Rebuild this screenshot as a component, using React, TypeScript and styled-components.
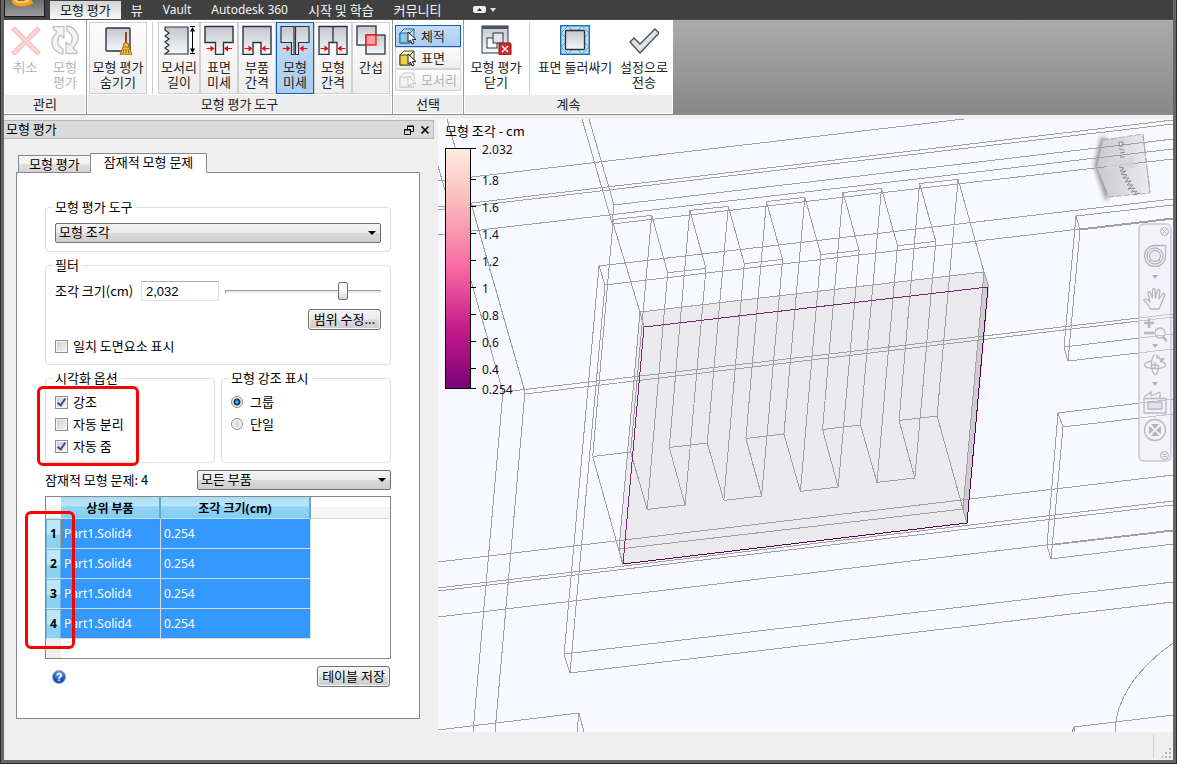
import React from 'react';
import styled, { createGlobalStyle, css } from 'styled-components';

const GlobalStyle = createGlobalStyle`
  *, *::before, *::after { box-sizing: border-box; }
  body {
    margin: 0;
    font: 13px/16px "Noto Sans CJK KR", "Noto Sans", sans-serif;
    color: #000;
    background: #efefef;
  }
  button, input, select { font: inherit; color: inherit; margin: 0; }
  svg { display: block; }
`;

/* ---------- window frame ---------- */

const Desktop = styled.div`
  display: flex;
  min-height: 100vh;
  border: solid #2c2c2c;
  border-width: 0 1px 1px;
`;

const Window = styled.div`
  display: flex;
  flex: 1;
  flex-direction: column;
  min-width: 0;
  background: #efefef;
  border: solid #686664;
  border-width: 0 3px 3px;
`;

const MenuBar = styled.nav`
  display: flex;
  height: 20px;
  align-items: flex-end;
  background: #404040;
  color: #f4f4f4;
  border-bottom: 1px solid #4c4c4c;
`;

const AppButton = styled.button`
  align-self: flex-start;
  width: 41px;
  height: 17px;
  margin-right: 5px;
  padding: 0;
  overflow: hidden;
  background: linear-gradient(#6c6c6c, #9c9c9c);
  border: 1px solid #1a1a1a;
  border-top: 0;
`;

const MenuTab = styled.button<{ $active?: boolean }>`
  height: 18px;
  padding: 0 10px 2px;
  border: 0;
  background: none;
  line-height: 15px;
  white-space: nowrap;
  ${(p) =>
    p.$active &&
    css`
      background: linear-gradient(#d2d2d2, #fafafa);
      color: #111;
    `}
`;

const LatinTab = styled(MenuTab)`
  font-family: "Noto Sans", sans-serif;
  font-size: 12px;
`;

const MiniMenu = styled.button`
  display: flex;
  align-items: center;
  gap: 4px;
  height: 18px;
  margin-left: 22px;
  padding: 0 0 1px;
  border: 0;
  background: none;
`;

/* ---------- ribbon ---------- */

const Ribbon = styled.div`
  display: flex;
  height: 95px;
  background: linear-gradient(#ababab, #888);
  border-bottom: 1px solid #8e8e8e;
`;

const RibbonPanel = styled.section`
  display: flex;
  flex-direction: column;
  padding: 2px 1px 1px;
  background: #fff;
  border-right: 1px solid #9a9a9a;
  &:last-of-type { border-right: 0; }
`;

const PanelBody = styled.div<{ $gap?: number }>`
  display: flex;
  flex: 1;
  gap: ${(p) => p.$gap ?? 0}px;
  padding: 0 1px;
`;

const PanelTitle = styled.h2`
  height: 18px;
  margin: 0;
  font-size: 13px;
  font-weight: 400;
  line-height: 17px;
  text-align: center;
  color: #222;
  background: #ededed;
`;

const ToolButton = styled.button<{ $w: number; $framed?: boolean; $active?: boolean }>`
  display: flex;
  flex-direction: column;
  align-items: center;
  gap: 4px;
  width: ${(p) => p.$w}px;
  height: 72px;
  padding: 2px 0 0;
  border: 1px solid transparent;
  background: none;
  line-height: 15px;
  white-space: pre;
  color: #222;
  ${(p) =>
    p.$framed &&
    css`
      border-color: #cfcfcf;
      background: linear-gradient(#fdfdfd, #eee);
    `}
  ${(p) =>
    p.$active &&
    css`
      border-color: #0f62b4;
      background: linear-gradient(#c4dcf4, #a9cdf0);
    `}
  &:disabled { color: #b4b4b4; }
`;

const Divider = styled.span<{ $side: number }>`
  width: 1px;
  height: 72px;
  margin: 0 ${(p) => p.$side}px;
  background: #cdcdcd;
`;

const SmallStack = styled.div`
  display: flex;
  flex-direction: column;
  padding-top: 3px;
`;

const SmallButton = styled.button<{ $active?: boolean }>`
  display: flex;
  align-items: center;
  gap: 5px;
  width: 66px;
  height: 22px;
  padding: 0 3px;
  border: 1px solid #d6d6d6;
  background: linear-gradient(#fcfcfc, #eee);
  color: #222;
  white-space: nowrap;
  ${(p) =>
    p.$active &&
    css`
      border-color: #0f62b4;
      background: linear-gradient(#c4dcf4, #a9cdf0);
    `}
  &:disabled { color: #b4b4b4; }
`;

/* ---------- workspace and dock ---------- */

const Workspace = styled.main`
  display: flex;
  flex: 1;
  padding-top: 4px;
`;

const Dock = styled.aside`
  display: flex;
  flex-direction: column;
  width: 434px;
  padding: 1px 4px 13px 0;
`;

const DockTitle = styled.header`
  display: flex;
  align-items: center;
  height: 19px;
  padding-left: 2px;
  background: #dadada;
  border: 1px solid #b8b8b8;
  border-left: 0;
  h1 { flex: 1; margin: 0; padding-bottom: 2px; font-size: 13px; line-height: 15px; font-weight: 400; }
`;

const TitleButton = styled.button`
  width: 16px;
  height: 16px;
  padding: 3px;
  border: 0;
  background: none;
`;

const TabRow = styled.div`
  display: flex;
  align-items: flex-end;
  margin: 14px 0 -1px 14px;
`;

const DockTab = styled.button<{ $active?: boolean }>`
  position: relative;
  height: ${(p) => (p.$active ? 20 : 18)}px;
  padding: 0 ${(p) => (p.$active ? 13 : 10)}px 3px;
  border: 1px solid #888890;
  white-space: nowrap;
  line-height: 15px;
  background: ${(p) => (p.$active ? '#fff' : 'linear-gradient(#f4f4f4 45%, #dedede 55%, #d4d4d4)')};
  border-bottom-color: ${(p) => (p.$active ? '#fff' : '#888890')};
  margin-left: ${(p) => (p.$active ? -1 : 0)}px;
`;

const TabPanel = styled.section`
  display: flex;
  flex: 1;
  flex-direction: column;
  gap: 5px;
  margin: 0 14px 0 12px;
  padding: 26px 28px 10px;
  background: #fff;
  border: 1px solid #888890;
`;

const Group = styled.fieldset`
  position: relative;
  min-width: 0;
  margin: 0;
  padding: 8px 9px;
  border: 1px solid #d5dfe5;
  border-radius: 4px;
  legend { height: 16px; margin-left: -2px; padding: 0 3px 0 2px; line-height: 15px; }
`;

const FilterGroup = styled(Group)`
  padding-bottom: 10px;
`;

const Stack = styled.div<{ $gap: number }>`
  display: flex;
  flex-direction: column;
  gap: ${(p) => p.$gap}px;
`;

const Row = styled.div<{ $gap: number; $end?: boolean }>`
  display: flex;
  align-items: center;
  gap: ${(p) => p.$gap}px;
  justify-content: ${(p) => (p.$end ? 'flex-end' : 'flex-start')};
`;

const PartsRow = styled(Row)`
  margin-top: 2px;
`;

const SplitRow = styled.div`
  display: grid;
  grid-template-columns: 170px 1fr;
  gap: 6px;
`;

const SelectBox = styled.div`
  position: relative;
  flex: 1;
  &::after {
    content: '';
    position: absolute;
    top: 8px;
    right: 5px;
    border: solid transparent;
    border-width: 4px 4px 0;
    border-top-color: #000;
    pointer-events: none;
  }
`;

const Select = styled.select`
  appearance: none;
  display: block;
  width: 100%;
  height: 20px;
  padding: 0 18px 2px 3px;
  border: 1px solid #707070;
  border-radius: 2px;
  line-height: 16px;
  background: linear-gradient(#f4f4f4, #ebebeb 48%, #dadada 52%, #cdcdcd);
`;

const PushButton = styled.button`
  min-width: 73px;
  height: 21px;
  padding: 0 3px 2px;
  border: 1px solid #707070;
  border-radius: 3px;
  line-height: 16px;
  white-space: nowrap;
  background: linear-gradient(#f4f4f4, #ebebeb 48%, #dadada 52%, #cdcdcd);
  box-shadow: inset 0 0 0 1px #f8f8f8;
`;

const SizeLabel = styled.label`
  width: 80px;
`;

const SizeInput = styled.input`
  width: 78px;
  height: 20px;
  padding: 0 4px;
  border: 1px solid #e2e3ea;
  border-top-color: #abadb3;
  background: #fff;
  font-family: "Liberation Sans", sans-serif;
`;

const Slider = styled.input`
  appearance: none;
  flex: 1;
  min-width: 0;
  height: 20px;
  background: none;
  &::-webkit-slider-runnable-track {
    height: 3px;
    border-top: 1px solid #9c9c9c;
    border-left: 1px solid #9c9c9c;
    background: #e7eaea;
  }
  &::-webkit-slider-thumb {
    appearance: none;
    width: 10px;
    height: 18px;
    margin-top: -9px;
    border: 1px solid #707070;
    border-radius: 2px;
    background: linear-gradient(#f6f6f6 50%, #d4d4d4);
  }
`;

const OptionLabel = styled.label`
  display: flex;
  align-items: center;
  gap: 5px;
  height: 16px;
`;

const CheckBox = styled.input`
  appearance: none;
  width: 13px;
  height: 13px;
  border: 1px solid #8e8f8f;
  background: linear-gradient(135deg, #c8cdd2, #f6f6f6);
  box-shadow: inset 0 0 0 1px #f4f4f4;
  &:checked::after {
    content: '';
    display: block;
    width: 5px;
    height: 9px;
    margin: 0 0 0 3px;
    border: solid #3a4f93;
    border-width: 0 2px 2px 0;
    transform: rotate(35deg);
  }
`;

const Radio = styled.input`
  appearance: none;
  width: 12px;
  height: 12px;
  margin-right: 2px;
  border: 1px solid #8e8f8f;
  border-radius: 50%;
  background: radial-gradient(#dcdcdc 25%, #f4f4f4 65%);
  &:checked { background: radial-gradient(circle at 50% 50%, #4fb4e2 0 1px, #17527f 2px, #10334f 3px, #eee 4px); }
`;

const IssueCount = styled.label`
  width: 146px;
`;

const Annotation = styled.span<{ $x: number; $y: number; $w: number; $h: number }>`
  position: absolute;
  left: ${(p) => p.$x}px;
  top: ${(p) => p.$y}px;
  width: ${(p) => p.$w}px;
  height: ${(p) => p.$h}px;
  border: 3px solid #fb0000;
  border-radius: 6px;
  pointer-events: none;
`;

/* ---------- issue table ---------- */

const TableFrame = styled.div`
  position: relative;
  height: 163px;
  margin-top: 1px;
  border: 1px solid #828790;
  background: linear-gradient(to right, #efefef 15px, #fff 15px);
`;

const Table = styled.table`
  width: 100%;
  table-layout: fixed;
  border-collapse: separate;
  border-spacing: 0;
  font-family: "Noto Sans", "Noto Sans CJK KR", sans-serif;
  font-size: 12px;
  thead th { height: 22px; }
  tbody tr { height: 30px; }
`;

const HeadCell = styled.th<{ $blank?: boolean }>`
  padding: 2px 0 0;
  line-height: 18px;
  border-bottom: 1px solid ${(p) => (p.$blank ? '#d8d8d8' : '#bfe0ee')};
  border-right: ${(p) => (p.$blank ? '0' : '2px solid #62acc8')};
  background: ${(p) =>
    p.$blank
      ? 'linear-gradient(#fff 45%, #f5f5f6 50%)'
      : 'linear-gradient(#a8dcf2, #bde6f8 40%, #8fd4f4 48%, #84cdf0)'};
`;

const RowHead = styled.th`
  padding: 0;
  border: solid #6fb7d4;
  border-width: 1px 1px 0 1px;
  border-bottom: 1px solid #d8eef6;
  background: linear-gradient(#bde6f8 50%, #8cd2f3 55%);
`;

const Cell = styled.td<{ $focused?: boolean }>`
  padding: 0 3px;
  color: #fff;
  background: #3399ff;
  border-right: 1px solid #d8d8d8;
  border-bottom: 1px solid #d8d8d8;
  outline: ${(p) => (p.$focused ? '1px dotted #c8702a' : 'none')};
  outline-offset: -2px;
`;

const Footer = styled.div`
  display: flex;
  align-items: center;
  justify-content: space-between;
  margin-top: 2px;
  padding: 0 1px 0 7px;
`;

const HelpButton = styled.button`
  width: 14px;
  height: 14px;
  padding: 0;
  border: 1px solid #8a9cc0;
  border-radius: 50%;
  font: bold 11px/12px "Liberation Sans", sans-serif;
  color: #fff;
  background: radial-gradient(circle at 50% 20%, #7da8f0, #1c4fc4 60%);
`;

/* ---------- model view ---------- */

const Viewport = styled.section`
  position: relative;
  flex: 1;
  min-width: 0;
  overflow: hidden;
  background: #f8f9fe;
`;

const Wireframe = styled.svg`
  position: absolute;
  inset: 0;
  width: 100%;
  height: 100%;
`;

const Legend = styled.figure`
  position: absolute;
  left: 7px;
  top: 4px;
  margin: 0;
  figcaption { line-height: 16px; }
  svg { font: 12px "Noto Sans", sans-serif; }
`;

const NavBar = styled.nav`
  position: absolute;
  right: 1px;
  top: 104px;
  display: flex;
  flex-direction: column;
  align-items: center;
  width: 34px;
  border: 2px solid rgba(190, 190, 200, 0.6);
  border-radius: 6px;
  background: rgba(238, 236, 244, 0.5);
`;

const NavButton = styled.button<{ $h: number; $corner?: 'top' | 'bottom' }>`
  display: flex;
  align-items: ${(p) => (p.$corner === 'bottom' ? 'flex-end' : 'center')};
  justify-content: center;
  align-self: ${(p) => (p.$corner ? 'flex-end' : 'center')};
  height: ${(p) => p.$h}px;
  padding: 0 ${(p) => (p.$corner ? 1 : 0)}px;
  border: 0;
  background: none;
`;

const StatusBar = styled.footer`
  display: flex;
  justify-content: flex-end;
  gap: 8px;
  height: 28px;
  padding: 2px 2px 2px 0;
  background: #efefef;
`;

const StatusDivider = styled.span`
  width: 1px;
  background: #d2d2d2;
`;

/* ---------- ribbon icons ---------- */

const INK = '#2b3340';

const Metal = () => (
  <defs>
    <linearGradient id="metal" x1="0" y1="0" x2="0" y2="1">
      <stop offset="0" stopColor="#c3c7ce" />
      <stop offset="1" stopColor="#f6f7f8" />
    </linearGradient>
  </defs>
);

const Icon = ({ children, w = 30 }: { children: React.ReactNode; w?: number }) => (
  <svg width={w} height="30" viewBox={`0 0 ${w} 30`} fill="none">
    {children}
  </svg>
);

const CancelIcon = () => (
  <Icon>
    <path d="M2 3 28 29M28 3 2 29" stroke="#e8b4b4" strokeWidth="5" />
    <path d="M2.500 3.500 27.500 28.500M27.500 3.500 2.500 28.500" stroke="#ffd3d1" strokeWidth="3.400" />
  </Icon>
);

const RefreshIcon = () => (
  <Icon>
    <g fill="#f3f3f3" stroke="#c2c2c2" strokeWidth="1.3" strokeLinejoin="round">
      <path d="M13 29C5 28 1 21 2 15 3 11 5 9 7 7L3 3.500V1.500H14V13L10.500 10C7 13 6 20 13 24Z" />
      <path d="M17 1C25 2 29 9 28 15 27 19 25 21 23 23L27 26.500V28.500H16V17L19.500 20C23 17 24 10 17 6Z" />
    </g>
  </Icon>
);

const HideIcon = () => (
  <Icon>
    <rect x="3" y="3" width="24" height="23" rx="1" fill="url(#metal)" stroke={INK} strokeWidth="1.4" />
    <path d="M23 7V19" stroke="#8a4b1a" strokeWidth="2" />
    <path d="M21 18h4l1 4 3 8H17l3-8Z" fill="#f3bd4a" stroke="#a86a12" />
    <path d="M20 22h6M20 29l1-5M23 29v-5M26 29l-1-5" stroke="#a86a12" />
  </Icon>
);

const EdgeIcon = () => (
  <Icon w={32}>
    <path d="M2 2H25V29H2L6 26 2 23 6 20 2 17 6 14 2 11 6 8 2 5Z" fill="url(#metal)" stroke={INK} strokeWidth="1.2" />
    <path d="M27 1.500H32M27 28.500H32M29.500 4V26" stroke="#000" />
    <path d="M27 6.500 29.500 2 32 6.500ZM27 23.500 29.500 28 32 23.500Z" fill="#000" />
  </Icon>
);

const RedArrows = ({ y, a, b }: { y: number; a: number; b: number }) => (
  <g>
    <path d={`M${a - 8} ${y}H${a - 2}M${b + 8} ${y}H${b + 2}`} stroke="#f00" />
    <path d={`M${a} ${y}l-4-3v6ZM${b} ${y}l4-3v6Z`} fill="#f00" />
  </g>
);

const SurfaceFineIcon = () => (
  <Icon>
    <path d="M1 1.500H29V17.500H19.500V29.500H11.500V17.500H1Z" fill="url(#metal)" stroke={INK} strokeWidth="1.400" />
    <RedArrows y={23.5} a={10.5} b={20} />
  </Icon>
);

const PartGapIcon = () => (
  <Icon>
    <path d="M1 1.500H29V29.500H19V17.500H11V29.500H1Z" fill="url(#metal)" stroke={INK} strokeWidth="1.400" />
    <RedArrows y={23.5} a={10.5} b={19.5} />
  </Icon>
);

const ModelFineIcon = () => (
  <Icon>
    <path d="M14.500 1.500V29.500" stroke="#fff" />
    <path d="M1 1.500H14V29.500H11.500V17.500H1ZM15.500 1.500H29V17.500H18.500V29.500H15.500Z" fill="url(#metal)" stroke={INK} strokeWidth="1.200" />
    <RedArrows y={23.5} a={10.5} b={19.5} />
  </Icon>
);

const ModelGapIcon = () => (
  <Icon>
    <path d="M1 1.500H15V17.500H11V29.500H1ZM15 1.500H29V29.500H19V17.500H15Z" fill="url(#metal)" stroke={INK} strokeWidth="1.300" />
    <RedArrows y={23.5} a={10.5} b={19.5} />
  </Icon>
);

const InterferenceIcon = () => (
  <Icon>
    <rect x="1" y="1" width="19" height="19" fill="url(#metal)" stroke={INK} strokeWidth="1.300" />
    <rect x="10" y="10" width="19" height="19" fill="url(#metal)" stroke={INK} strokeWidth="1.300" />
    <rect x="10" y="10" width="10" height="10" fill="#ff9c9c" stroke="#f21616" strokeWidth="1.300" />
  </Icon>
);

const CloseEvalIcon = () => (
  <Icon w={32}>
    <rect x="2" y="1" width="26" height="27" fill="url(#metal)" stroke={INK} />
    <path d="M2 2.500H28" stroke="#4a525e" strokeWidth="3" />
    <rect x="7" y="13" width="10" height="10" fill="#fff" stroke={INK} />
    <rect x="13" y="8" width="10" height="10" fill="#e4e7ea" stroke={INK} />
    <rect x="19" y="18" width="12" height="12" rx="1" fill="#cf2e2e" stroke="#8d1212" />
    <path d="M22 21l6 6M28 21l-6 6" stroke="#fff" strokeWidth="1.300" />
  </Icon>
);

const WrapIcon = () => (
  <Icon>
    <rect x="0.700" y="0.700" width="28.600" height="28.600" fill="#b9dff5" stroke="#1f6fb0" strokeWidth="1.400" />
    <path
      d="M1 8 8 1M1 22 22 1M8 29 29 8M22 29 29 22M22 1 29 8M8 1 29 22M1 8 22 29M1 22 8 29"
      stroke="#5ba5d3"
    />
    <rect x="5.500" y="5.500" width="19" height="19" rx="1" fill="url(#metal)" stroke={INK} strokeWidth="1.300" />
  </Icon>
);

const SendIcon = () => (
  <Icon>
    <path d="M1 17 5 13 11 19 26 4 30 8 11 28Z" fill="#dfe2e5" stroke="#4a4f57" strokeWidth="1.300" />
  </Icon>
);

const CubeIcon = ({ tone }: { tone: 'blue' | 'yellow' | 'gray' }) => {
  const fills = { blue: ['#bfe2f3', '#8cc6e2', '#1f6c96'], yellow: ['#fbf6cf', '#f2d13c', '#4a4420'], gray: ['#fafafa', '#f2f2f2', '#c9c9c9'] };
  const [light, face, edge] = fills[tone];
  return (
    <svg width="17" height="17" viewBox="0 0 17 17" fill="none">
      <path d="M1 5 5 1H15V11L11 15H1Z" fill={light} stroke={edge} />
      <rect x="1" y="5" width="10" height="10" fill={face} stroke={edge} />
      <path d="M11 5l4-4" stroke={edge} />
      <path d="M9 4v10l2.500-2 1.500 4 2-1-1.500-3.500H17Z" fill="#fff" stroke={tone === 'gray' ? '#c4c4c4' : '#222'} />
    </svg>
  );
};

/* ---------- wireframe geometry ---------- */

type Pt = [number, number];
type Seg = [number, number, number, number];

const edges: Seg[] = [
  // left uprights
  [447, 119, 525, 392], [438, 166, 503, 392], [503, 392, 473, 732], [525, 392, 495, 732],
  [582, 119, 612, 223], [589, 119, 614, 205], [614, 205, 612, 223],
  [599, 266, 564, 655], [605, 285, 570, 673], [599, 266, 605, 285], [564, 655, 570, 673],
  [613, 223, 640, 312],
  // long upper rails
  [438, 181, 964, 119], [438, 207, 1173, 120], [438, 210, 1173, 124], [614, 205, 1173, 139],
  [438, 235, 1173, 149], [612, 224, 1173, 159], [599, 266, 1173, 199], [605, 285, 1173, 218],
  // centre rails
  [503, 392, 1173, 314], [525, 394, 1173, 317],
  // lower rails
  [438, 562, 1173, 475], [438, 588, 1173, 501], [438, 591, 1173, 505], [438, 617, 1173, 530],
  [564, 654, 1173, 582], [570, 673, 1173, 602],
  [438, 730, 579, 713], [579, 713, 577, 732], [579, 713, 584, 732],
  // right-hand boxes
  [1076, 216, 1173, 205], [1076, 216, 1080, 230], [1076, 216, 1064, 347], [1080, 230, 1068, 361],
  [1064, 347, 1068, 361], [1064, 347, 1173, 334], [1068, 361, 1173, 349], [1080, 230, 1173, 219],
  [1058, 413, 1173, 399], [1063, 427, 1173, 414], [1058, 413, 1063, 427], [1058, 413, 1047, 545],
  [1063, 427, 1051, 559], [1047, 545, 1051, 559], [1051, 559, 1173, 544], [1052, 545, 1173, 531],
  [1074, 727, 1173, 715], [1074, 727, 1072, 732], [1074, 727, 1075, 732],
  // rear plate
  [640, 312, 984, 272], [640, 312, 619, 549], [640, 312, 644, 327], [619, 549, 623, 564],
  [984, 272, 963, 509], [984, 272, 989, 287], [619, 549, 963, 509], [963, 509, 967, 523],
];

const at = (x: number, y: number, i: number, dx = 76.6, dy = -9.0): Pt => [x + dx * i, y + dy * i];
const seg = (a: Pt, b: Pt): Seg => [a[0], a[1], b[0], b[1]];

const fins: Seg[] = [0, 1, 2, 3, 4].flatMap((i) => {
  const topL = at(613.2, 219.5, i);
  const topR = at(651.7, 215.4, i);
  const lowL = at(592.7, 456.5, i);
  const lowR = at(630.7, 452, i);
  const own = [seg(topL, topR), seg(topL, lowL), seg(topR, lowR), seg(lowL, lowR)];
  // the first fin's lower corner runs down to the plate's front corner
  if (i === 0) own.push(seg(lowL, [623, 565]));
  if (i === 4) return [...own, seg(topR, [984, 272]), seg(lowR, [963, 509])];
  const midL = at(667.7, 272.7, i);
  const midR = at(706, 268.4, i);
  const baseL = at(647.2, 509.4, i);
  const baseR = at(685, 505, i);
  return [
    ...own,
    seg(topR, midL), seg(at(613.2, 219.5, i + 1), midR), seg(midL, midR),
    seg(midL, baseL), seg(midR, baseR), seg(baseL, baseR),
    seg(lowR, baseL), seg(at(592.7, 456.5, i + 1), baseR),
  ];
});

const toPath = (list: Seg[]) => list.map(([a, b, c, d]) => `M${a} ${b}L${c} ${d}`).join('');

const Model = () => (
  <Wireframe viewBox="438 119 735 613" preserveAspectRatio="xMinYMin slice" fill="none" role="img" aria-label="모형">
    <defs>
      <linearGradient id="cube" x1="0" x2="1">
        <stop offset="0" stopColor="#c9c9cb" />
        <stop offset="1" stopColor="#ececee" />
      </linearGradient>
      <filter id="soft" x="-50%" y="-20%" width="200%" height="140%">
        <feGaussianBlur stdDeviation="2" />
      </filter>
    </defs>
    <path d="M640 312 984 272 989 287 967 523 623 564 619 549Z" fill="#ebeaef" />
    <path d="M984 272 989 287 967 523 963 509Z" fill="#cfccd4" />
    <path d="M1101 136 1094 165 1106 202 1112 190V142Z" fill="#9a9a9e" filter="url(#soft)" />
    <path d="M1103 140 1143 134 1150 193 1109 197 1097 167Z" fill="url(#cube)" />
    <g shapeRendering="crispEdges" strokeWidth="1">
      <path d={toPath(edges) + toPath(fins)} stroke="#a0a0a0" />
      <path d="M1173 643Q1116 684 1115 732" stroke="#a0a0a0" />
      <path d="M623 564 644 327 988 287" stroke="#772a77" />
      <path d="M988 287 967 523 623 564" stroke="#5c0058" />
    </g>
    <path d="M1103 140 1143 134 1150 193 1109 197" stroke="#b0b0b2" strokeDasharray="6 2" />
    <path d="M1143 136 1150 192" stroke="#a4a4a6" strokeDasharray="5 2 2 2" />
    <path d="M1106 163 1134 157 1135 168 1108 171Z" fill="#d3d6e0" opacity=".8" />
    <path
      d="M1119 142h4v4h-4ZM1119 149l5 1M1120 153l5-1M1120 157h5M1119 167l5 1-4 3 6 0-5 3 6 1-4 3 6 0-4 4 6-1-4 4 6 0-5 4 7-1-4 4 6-1-3 4 6-2"
      stroke="#8c8c92"
    />
  </Wireframe>
);

const ticks = [
  ['2.032', 0], ['1.8', 31], ['1.6', 58], ['1.4', 85], ['1.2', 112],
  ['1', 139], ['0.8', 166], ['0.6', 193], ['0.4', 220], ['0.254', 240],
] as const;

const ColorScale = () => (
  <Legend>
    <figcaption>모형 조각 - cm</figcaption>
    <svg width="90" height="262" viewBox="0 -9 90 262">
      <defs>
        <linearGradient id="scale" x1="0" y1="0" x2="0" y2="1">
          <stop offset="0" stopColor="#feebe2" />
          <stop offset=".2" stopColor="#fbc0bf" />
          <stop offset=".35" stopColor="#fa95b0" />
          <stop offset=".5" stopColor="#f768a1" />
          <stop offset=".75" stopColor="#c51b8a" />
          <stop offset="1" stopColor="#7a0177" />
        </linearGradient>
      </defs>
      <rect x=".5" y=".5" width="25" height="240" fill="url(#scale)" stroke="#000" />
      {ticks.map(([label, y]) => (
        <g key={label}>
          <path d={`M26 ${y + 0.5}h5`} stroke="#000" />
          <text x="37" y={y + 6} fill="#111">{label}</text>
        </g>
      ))}
    </svg>
  </Legend>
);

/* ---------- navigation bar ---------- */

const Caret = () => (
  <svg width="6" height="4" viewBox="0 0 6 4"><path d="M0 0h6L3 4Z" fill="#b0b0b8" /></svg>
);

const NavGlyph = ({ children }: { children: React.ReactNode }) => (
  <svg width="24" height="24" viewBox="0 0 24 24" fill="none" stroke="#b8b8c0" strokeWidth="1.300" strokeLinejoin="round">
    {children}
  </svg>
);

const NavigationBar = () => (
  <NavBar aria-label="탐색 막대">
    <NavButton $h={12} $corner="top" aria-label="닫기">
      <svg width="9" height="9" viewBox="0 0 9 9" fill="none" stroke="#b2b2ba"><circle cx="4.500" cy="4.500" r="4" /><path d="M2.500 2.500l4 4M6.500 2.500l-4 4" /></svg>
    </NavButton>
    <NavButton $h={37} aria-label="휠">
      <NavGlyph>
        <path d="M12 1.500H22.500V12A10.500 10.500 0 1 1 12 1.500Z" />
        <circle cx="12" cy="12" r="8" />
        <circle cx="12" cy="12" r="5.500" fill="#ececf0" />
        <path d="M6 18l2.500-2.500M18 18l-2.500-2.500" />
      </NavGlyph>
    </NavButton>
    <NavButton $h={6} aria-label="휠 옵션"><Caret /></NavButton>
    <NavButton $h={37} aria-label="초점이동">
      <NavGlyph>
        <path d="M8 22C5 19 4 16 1 13.500 0.500 12 2.500 11.500 4 12.500L7 15 5 6C5 4 7 4 7.500 6L9.500 11 9.500 3C9.500 1 12 1 12 3L12.500 11 14.500 3.500C15 2 17 2.500 16.800 4L16 12 19.500 7C20.500 5.500 22.500 6.500 21.500 8.500L19 15C18 18 17 20 16 22Z" />
      </NavGlyph>
    </NavButton>
    <NavButton $h={26} aria-label="줌">
      <NavGlyph>
        <path d="M6 0V10M1 5H11M1 15H11" strokeWidth="2.500" />
        <circle cx="17" cy="15" r="5" />
        <path d="M20 19l4 4" strokeWidth="2.500" />
      </NavGlyph>
    </NavButton>
    <NavButton $h={6} aria-label="줌 옵션"><Caret /></NavButton>
    <NavButton $h={32} aria-label="궤도">
      <NavGlyph>
        <path d="M12 1.500C9.500 3 8.500 8 8.500 12S10 21 12 22C14.500 21 15.500 17 15.500 12" />
        <path d="M8 8C3 9 1 11 1.500 12.500 3 16 20 17 22.500 12.500 23 10.500 20 9 18 8.500" />
        <path d="M12 9v6M9 12h6M14 6V2.500L17 6h4L17 9M19 5l-2 3" />
      </NavGlyph>
    </NavButton>
    <NavButton $h={6} aria-label="궤도 옵션"><Caret /></NavButton>
    <NavButton $h={30} aria-label="면 보기">
      <NavGlyph>
        <path d="M1 8.500H23V23H1Z" />
        <rect x="5" y="12" width="14" height="7" fill="#e2e2ec" />
        <path d="M1 7 8 2V6L17 2V8" />
      </NavGlyph>
    </NavButton>
    <NavButton $h={26} aria-label="전체 보기">
      <NavGlyph>
        <circle cx="12" cy="12" r="10.500" />
        <path d="M8 6h8l-4 5ZM8 18h8l-4-5ZM6 8v8l5-4ZM18 8v8l-5-4Z" fill="#b2b2ba" stroke="none" />
      </NavGlyph>
    </NavButton>
    <NavButton $h={17} $corner="bottom" aria-label="메뉴">
      <svg width="9" height="9" viewBox="0 0 9 9" fill="none" stroke="#b2b2ba"><circle cx="4.500" cy="4.500" r="4" /><path d="M2.500 3.500h4M2.500 5.500h4" /></svg>
    </NavButton>
  </NavBar>
);

/* ---------- page ---------- */

const evalTools = [
  { label: '모서리\n길이', icon: <EdgeIcon />, w: 42 },
  { label: '표면\n미세', icon: <SurfaceFineIcon />, w: 38 },
  { label: '부품\n간격', icon: <PartGapIcon />, w: 38 },
  { label: '모형\n미세', icon: <ModelFineIcon />, w: 38, active: true },
  { label: '모형\n간격', icon: <ModelGapIcon />, w: 38 },
  { label: '간섭', icon: <InterferenceIcon />, w: 38 },
];

const issues = [1, 2, 3, 4].map((id) => ({ id, part: 'Part1.Solid4', size: '0.254' }));

export default function App() {
  return (
    <Desktop>
      <GlobalStyle />
      <Window>
        <MenuBar>
          <AppButton aria-label="응용프로그램 메뉴">
            <svg width="39" height="16" viewBox="0 0 39 16" fill="none">
              <path d="M9 0C10 4 17 6 27 1" stroke="#f6a11c" strokeWidth="5" />
              <path d="M10 0C12 3 18 3 24 0" stroke="#ffd25c" strokeWidth="2" />
            </svg>
          </AppButton>
          <MenuTab $active>모형 평가</MenuTab>
          <MenuTab>뷰</MenuTab>
          <LatinTab>Vault</LatinTab>
          <LatinTab>Autodesk 360</LatinTab>
          <MenuTab>시작 및 학습</MenuTab>
          <MenuTab>커뮤니티</MenuTab>
          <MiniMenu aria-label="리본 최소화">
            <svg width="13" height="7" viewBox="0 0 13 7"><rect width="13" height="7" rx="2" fill="#ececec" /><path d="M4 5h5L6.500 2Z" fill="#333" /></svg>
            <svg width="6" height="4" viewBox="0 0 6 4"><path d="M0 0h6L3 4Z" fill="#ddd" /></svg>
          </MiniMenu>
        </MenuBar>

        <Ribbon>
          <RibbonPanel>
            <PanelBody $gap={1}>
              <ToolButton $w={39} disabled><CancelIcon />취소</ToolButton>
              <ToolButton $w={38} disabled><RefreshIcon />{'모형\n평가'}</ToolButton>
            </PanelBody>
            <PanelTitle>관리</PanelTitle>
          </RibbonPanel>
          <RibbonPanel>
            <PanelBody>
              <ToolButton $w={58} $framed><HideIcon />{'모형 평가\n숨기기'}</ToolButton>
              <Divider $side={5} />
              {evalTools.map((t) => (
                <ToolButton key={t.label} $w={t.w} $framed $active={t.active}>{t.icon}{t.label}</ToolButton>
              ))}
            </PanelBody>
            <PanelTitle>모형 평가 도구</PanelTitle>
          </RibbonPanel>
          <RibbonPanel>
            <PanelBody>
              <SmallStack>
                <SmallButton $active><CubeIcon tone="blue" />체적</SmallButton>
                <SmallButton><CubeIcon tone="yellow" />표면</SmallButton>
                <SmallButton disabled><CubeIcon tone="gray" />모서리</SmallButton>
              </SmallStack>
            </PanelBody>
            <PanelTitle>선택</PanelTitle>
          </RibbonPanel>
          <RibbonPanel>
            <PanelBody>
              <ToolButton $w={60}><CloseEvalIcon />{'모형 평가\n닫기'}</ToolButton>
              <Divider $side={3} />
              <ToolButton $w={84}><WrapIcon />표면 둘러싸기</ToolButton>
              <ToolButton $w={54}><SendIcon />{'설정으로\n전송'}</ToolButton>
            </PanelBody>
            <PanelTitle>계속</PanelTitle>
          </RibbonPanel>
          <svg width="0" height="0"><Metal /></svg>
        </Ribbon>

        <Workspace>
          <Dock>
            <DockTitle>
              <h1>모형 평가</h1>
              <TitleButton aria-label="분리">
                <svg width="10" height="10" viewBox="0 0 10 10" fill="none" stroke="#000">
                  <path d="M3.500 4V1.500h6v5H7M3 1h7M.500 4.500h6v5h-6ZM0 5h7" />
                </svg>
              </TitleButton>
              <TitleButton aria-label="닫기">
                <svg width="10" height="10" viewBox="0 0 10 10" stroke="#000" strokeWidth="1.700"><path d="M1.500 1.500l7 7M8.500 1.500l-7 7" /></svg>
              </TitleButton>
            </DockTitle>

            <TabRow>
              <DockTab>모형 평가</DockTab>
              <DockTab $active>잠재적 모형 문제</DockTab>
            </TabRow>

            <TabPanel>
              <Group>
                <legend>모형 평가 도구</legend>
                <SelectBox>
                  <Select aria-label="모형 평가 도구"><option>모형 조각</option></Select>
                </SelectBox>
              </Group>

              <FilterGroup>
                <legend>필터</legend>
                <Stack $gap={8}>
                  <Row $gap={6}>
                    <SizeLabel htmlFor="size">조각 크기(cm)</SizeLabel>
                    <SizeInput id="size" defaultValue="2,032" />
                    <Slider type="range" defaultValue={77} aria-label="조각 크기" />
                  </Row>
                  <Row $gap={0} $end><PushButton>범위 수정...</PushButton></Row>
                  <OptionLabel><CheckBox type="checkbox" />일치 도면요소 표시</OptionLabel>
                </Stack>
              </FilterGroup>

              <SplitRow>
                <Group>
                  <legend>시각화 옵션</legend>
                  <Stack $gap={6}>
                    <OptionLabel><CheckBox type="checkbox" defaultChecked />강조</OptionLabel>
                    <OptionLabel><CheckBox type="checkbox" />자동 분리</OptionLabel>
                    <OptionLabel><CheckBox type="checkbox" defaultChecked />자동 줌</OptionLabel>
                  </Stack>
                  <Annotation $x={-9} $y={0} $w={102} $h={80} />
                </Group>
                <Group>
                  <legend>모형 강조 표시</legend>
                  <Stack $gap={6}>
                    <OptionLabel><Radio type="radio" name="highlight" defaultChecked />그룹</OptionLabel>
                    <OptionLabel><Radio type="radio" name="highlight" />단일</OptionLabel>
                  </Stack>
                </Group>
              </SplitRow>

              <PartsRow $gap={6}>
                <IssueCount htmlFor="parts">잠재적 모형 문제: 4</IssueCount>
                <SelectBox>
                  <Select id="parts"><option>모든 부품</option></Select>
                </SelectBox>
              </PartsRow>

              <TableFrame>
                <Table>
                  <colgroup>
                    <col width="15" /><col width="100" /><col width="150" /><col />
                  </colgroup>
                  <thead>
                    <tr>
                      <HeadCell $blank />
                      <HeadCell>상위 부품</HeadCell>
                      <HeadCell>조각 크기(cm)</HeadCell>
                      <HeadCell $blank />
                    </tr>
                  </thead>
                  <tbody>
                    {issues.map((r) => (
                      <tr key={r.id}>
                        <RowHead scope="row">{r.id}</RowHead>
                        <Cell $focused={r.id === 1}>{r.part}</Cell>
                        <Cell>{r.size}</Cell>
                      </tr>
                    ))}
                  </tbody>
                </Table>
                <Annotation $x={-21} $y={14} $w={50} $h={138} />
              </TableFrame>

              <Footer>
                <HelpButton aria-label="도움말">?</HelpButton>
                <PushButton>테이블 저장</PushButton>
              </Footer>
            </TabPanel>
          </Dock>

          <Viewport>
            <Model />
            <ColorScale />
            <NavigationBar />
          </Viewport>
        </Workspace>

        <StatusBar>
          <StatusDivider />
          <svg width="9" height="24" viewBox="0 0 9 24" fill="#b4b4b4">
            <path d="M7 14h2v2H7ZM7 18h2v2H7ZM7 22h2v2H7ZM3 18h2v2H3ZM3 22h2v2H3ZM0 22h1v2H0Z" />
          </svg>
        </StatusBar>
      </Window>
    </Desktop>
  );
}
